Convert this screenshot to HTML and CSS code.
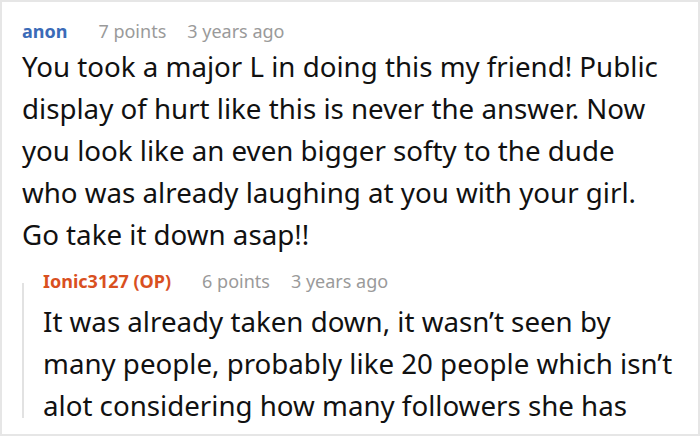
FILE: index.html
```html
<!DOCTYPE html>
<html>
<head>
<meta charset="utf-8">
<link rel="stylesheet" href="styles.css">
</head>
<body>
<div class="frame">
  <div class="comment">
    <div class="meta">
      <span class="author">anon</span>
      <span class="points">7 points</span>
      <span class="time">3 years ago</span>
    </div>
    <p class="text">You took a major L in doing this my friend! Public display of hurt like this is never the answer. Now you look like an even bigger softy to the dude who was already laughing at you with your girl. Go take it down asap!!</p>
    <div class="reply">
      <div class="meta">
        <span class="author op">Ionic3127 (OP)</span>
        <span class="points">6 points</span>
        <span class="time">3 years ago</span>
      </div>
      <p class="text reply-text">It was already taken down, it wasn’t seen by many people, probably like 20 people which isn’t alot considering how many followers she has</p>
    </div>
  </div>
</div>
</body>
</html>
```
FILE: styles.css
```css
html, body {
  margin: 0;
  padding: 0;
  background: #fff;
}
.frame {
  width: 700px;
  height: 436px;
  box-sizing: border-box;
  border: 2px solid #e6e6e6;
  overflow: hidden;
  font-family: "Noto Sans", "Open Sans", sans-serif;
  color: #111;
}
.comment {
  padding: 16px 22px 0 20px;
}
.meta {
  font-size: 18px;
  line-height: 26px;
  color: #9a9a9a;
  display: flex;
  align-items: baseline;
}
.author {
  font-weight: 700;
  color: #3b6bb8;
  margin-right: 31px;
}
.author.op {
  color: #d9501f;
}
.points {
  margin-right: 21px;
}
.text {
  margin: 1px 0 0 0;
  font-size: 27.7px;
  line-height: 42px;
}
.reply {
  margin-top: 13px;
  padding-left: 21px;
  background-image: linear-gradient(#e2e2e2, #e2e2e2);
  background-repeat: no-repeat;
  background-position: 0 15px;
  background-size: 2px calc(100% - 23px);
}
.reply-text {
  margin-top: 6px;
}
```
